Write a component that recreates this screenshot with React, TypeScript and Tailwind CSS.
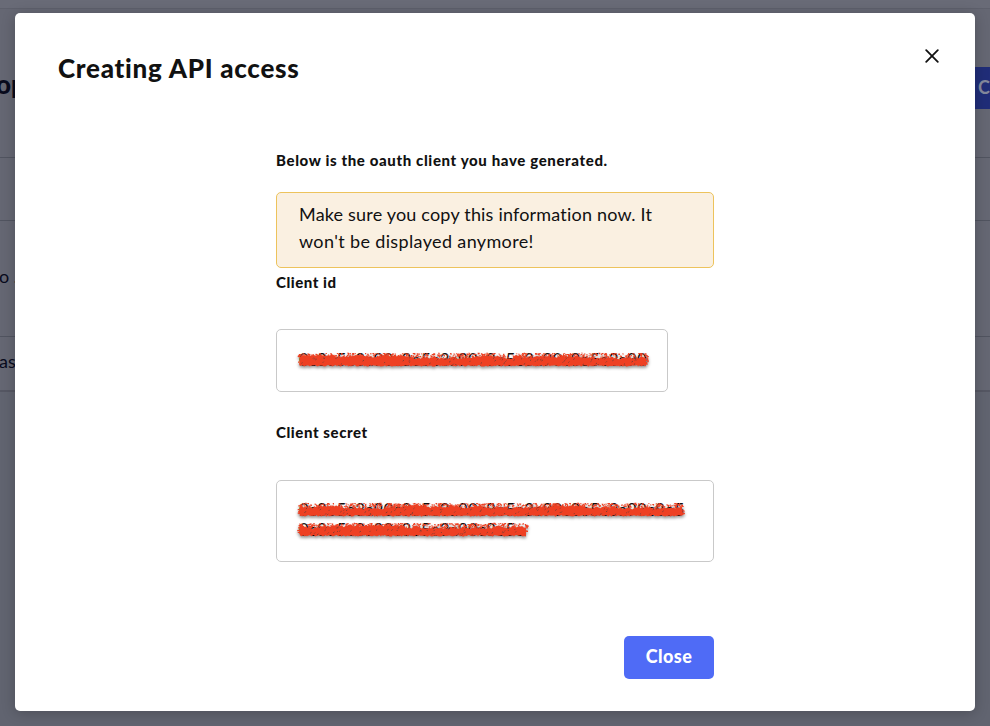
import React from "react";

// Small deterministic generator so that every stroke keeps the same rough edge.
function makeRandom(seed: number) {
  let s = seed;
  return () => {
    s = (s * 1664525 + 1013904223) % 4294967296;
    return s / 4294967296;
  };
}

function Scribble({ width, seed }: { width: number; seed: number }) {
  const rnd = makeRandom(seed);
  const top: string[] = [];
  const bottom: string[] = [];
  let wave = 0;
  for (let x = 3; x <= width - 3; x += 1) {
    wave = Math.max(-1.5, Math.min(1.8, wave + (rnd() - 0.5) * 1.6));
    top.push(`${x} ${(5.8 + wave + rnd() * 1.8).toFixed(1)}`);
    bottom.unshift(`${x} ${(15 + rnd() * 1.6).toFixed(1)}`);
  }
  let specks = "";
  for (let i = 0; i < width * 1.5; i++) {
    const x = 2 + rnd() * (width - 5);
    const y = 2.8 + rnd() * 4.2;
    specks += `M${x.toFixed(1)} ${y.toFixed(1)}h${(0.8 + rnd() * 1.5).toFixed(1)}v${(0.7 + rnd()).toFixed(1)}h-1z`;
  }
  for (let i = 0; i < 26; i++) {
    const right = i % 2 === 0;
    const x = right ? width - 4 + rnd() * 2.5 : rnd() * 3;
    specks += `M${x.toFixed(1)} ${(4 + rnd() * 11).toFixed(1)}h1.6v1.2h-1.6z`;
  }
  let nicks = "";
  for (let i = 0; i < width / 5; i++) {
    nicks += `M${(4 + rnd() * (width - 8)).toFixed(1)} ${(8 + rnd() * 7).toFixed(1)}l${(0.6 + rnd()).toFixed(1)} -1`;
  }
  return (
    <svg
      className="absolute -left-[2px] top-0 overflow-visible drop-shadow-[0_2px_1.5px_rgba(0,0,0,0.42)]"
      width={width}
      height={20}
      viewBox={`0 0 ${width} 20`}
      aria-hidden="true"
    >
      <path d={`M${top.join("L")}L${bottom.join("L")}Z`} fill="#ee4023" />
      <path d={specks} fill="#ee4023" />
      <path d={nicks} stroke="#6d3b34" strokeWidth="0.8" fill="none" />
    </svg>
  );
}

function MaskedLine({ length, width, seed }: { length: number; width: number; seed: number }) {
  return (
    <div className="relative h-5 whitespace-nowrap font-['Lato','Liberation_Sans',sans-serif] text-[17px] leading-5 text-[#111]">
      <div>{"0c8o5e3a9".repeat(5).slice(0, length)}</div>
      <Scribble width={width} seed={seed} />
    </div>
  );
}

function Backdrop() {
  return (
    <div className="flex h-full flex-col text-[#090b1d]">
      <div className="h-[9px] border-b border-[#5e606c] bg-[#696b77]" />
      <div className="flex h-[149px] items-start justify-between border-b border-[#515460]">
        <span className="-ml-[4px] mt-[59px] text-[26px] font-black leading-8">op</span>
        <span className="mt-[58px] h-[42px] w-[15px] bg-[#202d78] pl-[3px] text-[18px] font-bold leading-[41px] text-[#85899d]">
          C
        </span>
      </div>
      <div className="h-[63px] border-b border-[#515460]" />
      <div className="h-[116px] border-b border-[#515460] pt-[43px]">
        <span className="-ml-[1px] text-[18px] leading-6">o .</span>
      </div>
      <div className="h-[55px] border-b-2 border-[#555763] pt-[12px]">
        <span className="-ml-[1px] text-[18px] leading-6">as</span>
      </div>
      <div className="grow bg-[#616470]" />
    </div>
  );
}

export default function App() {
  return (
    <div className="relative h-[726px] w-[990px] overflow-hidden bg-[#656773] font-['Lato','Liberation_Sans',sans-serif] text-[#111] [font-variant-ligatures:none]">
      <Backdrop />
      <section
        role="dialog"
        className="absolute inset-x-[15px] top-[13px] flex h-[698px] flex-col rounded-[5px] bg-white shadow-[0_2px_14px_rgba(0,0,0,0.22)]"
      >
        <header className="flex items-start justify-between pl-[43px] pr-[35px] pt-[35px]">
          <h1 className="mt-[4px] text-[26px] font-black leading-8 tracking-[0.73px]">Creating API access</h1>
          <button aria-label="Close dialog" className="p-[1px]">
            <svg width="14" height="14" viewBox="0 0 14 14" className="block" stroke="#111" strokeWidth="1.8" strokeLinecap="round">
              <path d="M1.2 1.2L12.8 12.8M12.8 1.2L1.2 12.8" />
            </svg>
          </button>
        </header>
        <div className="mx-auto mt-[66px] flex w-[438px] flex-col">
          <h2 className="text-[15px] font-black leading-5 tracking-[0.63px]">Below is the oauth client you have generated.</h2>
          <p className="mt-[22px] h-[76px] rounded-[5px] border border-[#edc35c] bg-[#faf0e1] pl-[22px] pt-[8px] text-[18px] leading-[27px] tracking-[0.19px]">
            Make sure you copy this information now. It<br />
            <span className="tracking-[0.36px]">won't be displayed anymore!</span>
          </p>
          <h3 className="mt-[4px] text-[15px] font-black leading-5 tracking-[0.55px]">Client id</h3>
          <div className="mt-[37px] h-[63px] w-[392px] rounded-[5px] border border-[#c9c9c9] pl-[22px] pt-[20px]">
            <MaskedLine length={37} width={352} seed={17} />
          </div>
          <h3 className="mt-[30px] text-[15px] font-black leading-5 tracking-[0.58px]">Client secret</h3>
          <div className="mt-[38px] h-[82px] rounded-[5px] border border-[#c9c9c9] pl-[22px] pt-[19px]">
            <MaskedLine length={41} width={388} seed={42} />
            <MaskedLine length={24} width={232} seed={91} />
          </div>
          <button className="mt-[74px] h-[43px] w-[90px] self-end rounded-[5px] bg-[#4f6bf6] pb-[3px] text-[18px] font-black tracking-[0.4px] text-white">
            Close
          </button>
        </div>
      </section>
    </div>
  );
}
